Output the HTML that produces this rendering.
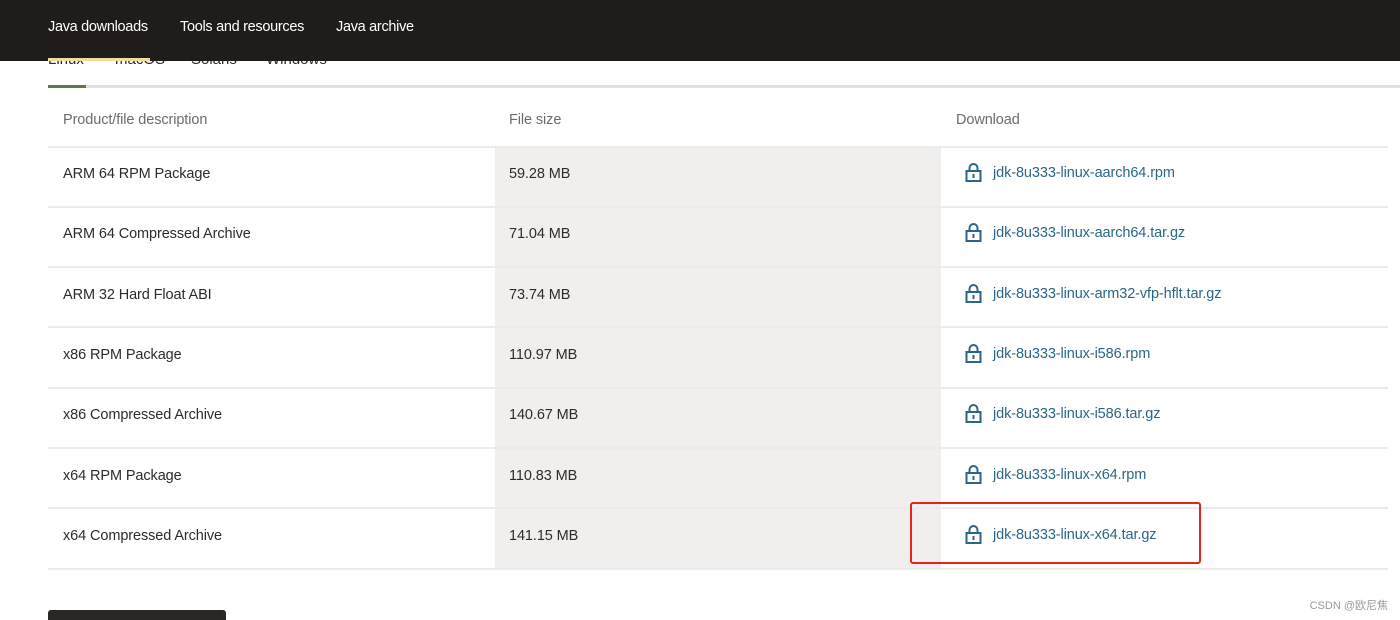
<!DOCTYPE html>
<html><head><meta charset="utf-8"><style>
*{margin:0;padding:0;box-sizing:border-box}
body{width:1400px;height:618px;overflow:hidden;background:#fff;font-family:"Liberation Sans",sans-serif;position:relative;color:#2e2b28}
.hdr{position:absolute;left:0;top:0;width:1400px;height:61px;background:#1f1d1b;z-index:5}
.hdr span{position:absolute;top:19px;color:#fff;font-size:14.5px;letter-spacing:-0.3px}
.tabs span{position:absolute;top:51px;font-size:15px;color:#2e2b28}
.uline{position:absolute;left:48px;top:85px;width:1352px;height:3px;background:#e0e0e0}
.uline i{position:absolute;left:0;top:0;width:38px;height:3px;background:#5b7a4a}
.col2{position:absolute;left:495px;top:147px;width:446px;height:422px;background:#f1efed}
.line{position:absolute;left:48px;width:1340px;height:2px;background:#ebebeb}
.t{position:absolute;font-size:14.5px;color:#2e2b28;letter-spacing:-0.1px}
.h{color:#6f6b67}
.a{position:absolute;left:993px;font-size:14.5px;color:#2a6688;letter-spacing:-0.1px}
.lk{position:absolute;left:965px}
.red{position:absolute;left:910px;top:502px;width:291px;height:62px;border:2.5px solid #e5241f;border-radius:3px}
.btn{position:absolute;left:48px;top:610px;width:178px;height:10px;background:#2a2725;border-radius:3px 3px 0 0}
.wm{position:absolute;right:12px;top:597px;font-size:11px;color:#999;font-family:"Liberation Sans","Noto Sans CJK SC",sans-serif}
</style></head><body>
<div class="hdr"><span style="left:48px">Java downloads</span><span style="left:180px">Tools and resources</span><span style="left:336px">Java archive</span></div>
<div style="position:absolute;left:48px;top:58px;width:102px;height:3px;background:#f0dca0;z-index:6"></div>
<div class="tabs"><span style="left:48px">Linux</span><span style="left:115px">macOS</span><span style="left:191px">Solaris</span><span style="left:266px">Windows</span></div>
<div class="uline"><i></i></div>
<div class="col2"></div>
<div class="t h" style="left:63px;top:112px">Product/file description</div>
<div class="t h" style="left:509px;top:112px">File size</div>
<div class="t h" style="left:956px;top:112px">Download</div>
<div class="line" style="top:146px"></div>
<div class="line" style="top:206px"></div>
<div class="line" style="top:266px"></div>
<div class="line" style="top:326px"></div>
<div class="line" style="top:387px"></div>
<div class="line" style="top:447px"></div>
<div class="line" style="top:507px"></div>
<div class="line" style="top:568px"></div>
<div id="rows"></div>
<script>
var d=[["ARM 64 RPM Package","59.28 MB","jdk-8u333-linux-aarch64.rpm"],["ARM 64 Compressed Archive","71.04 MB","jdk-8u333-linux-aarch64.tar.gz"],["ARM 32 Hard Float ABI","73.74 MB","jdk-8u333-linux-arm32-vfp-hflt.tar.gz"],["x86 RPM Package","110.97 MB","jdk-8u333-linux-i586.rpm"],["x86 Compressed Archive","140.67 MB","jdk-8u333-linux-i586.tar.gz"],["x64 RPM Package","110.83 MB","jdk-8u333-linux-x64.rpm"],["x64 Compressed Archive","141.15 MB","jdk-8u333-linux-x64.tar.gz"]];
var h="";d.forEach(function(r,i){var c=173+i*60.3,t=c-7;
h+='<div class="t" style="left:63px;top:'+t+'px">'+r[0]+'</div><div class="t" style="left:509px;top:'+t+'px">'+r[1]+'</div><div class="a" style="top:'+(t-1)+'px">'+r[2]+'</div>'+
'<svg class="lk" style="top:'+(c-10)+'px" width="17" height="19" viewBox="0 0 17 19"><path d="M4.5 8V5a4 4 0 0 1 8 0v3" fill="none" stroke="#2a6688" stroke-width="2"/><rect x="1.5" y="8" width="14" height="10" fill="none" stroke="#2a6688" stroke-width="2"/><rect x="7.5" y="11" width="2" height="4" fill="#2a6688"/></svg>';});
document.getElementById("rows").innerHTML=h;
</script>
<div class="red"></div>
<div class="btn"></div>
<div class="wm">CSDN @欧尼焦</div>
</body></html>
